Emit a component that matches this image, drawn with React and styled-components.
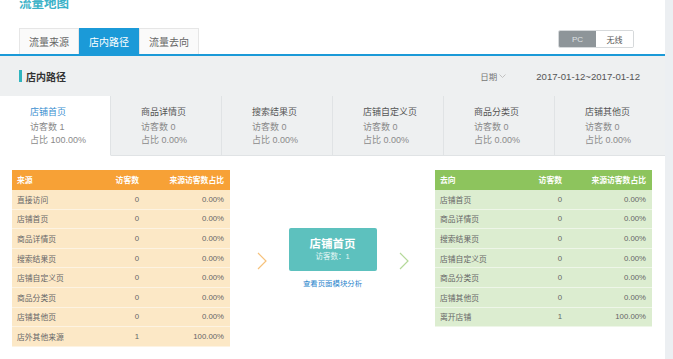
import React from "react"
import styled, { createGlobalStyle } from "styled-components"

const GlobalStyle = createGlobalStyle`
  html, body {
    margin: 0;
    padding: 0;
    background: #fff;
    overflow: hidden;
  }
  body {
    font-family: "Liberation Sans", "Noto Sans CJK SC", sans-serif;
    color: #333;
  }
`

const Page = styled.div`
  display: flex;
  width: 673px;
  height: 359px;
  overflow: hidden;
`

const Main = styled.div`
  width: 665px;
  flex-shrink: 0;
`

const Gutter = styled.div`
  flex: 1;
  background: #eceff2;
`

const PageTitle = styled.div`
  height: 12px;
  margin-top: -2px;
  padding-left: 19px;
  font-size: 12.5px;
  line-height: 12px;
  font-weight: bold;
  color: #3cb2c8;
`

const TabBar = styled.div`
  display: flex;
  align-items: flex-end;
  justify-content: space-between;
  height: 27px;
  margin-top: 17px;
  padding: 0 31px 0 19px;
  border-bottom: 2px solid #1b9ad8;
`

const Tabs = styled.div`
  display: flex;
`

const Tab = styled.div`
  width: 60px;
  height: 26px;
  box-sizing: border-box;
  display: flex;
  align-items: center;
  justify-content: center;
  font-size: 10px;
  color: ${({ active }) => (active ? "#fff" : "#666")};
  background: ${({ active }) => (active ? "#1b9ad8" : "#fafafa")};
  border: 1px solid ${({ active }) => (active ? "#1b9ad8" : "#e6e6e6")};
  border-bottom: none;
`

const Toggle = styled.div`
  display: flex;
  align-self: flex-start;
  margin-top: 3px;
  border: 1px solid #d6d9db;
  border-radius: 2px;
  overflow: hidden;
`

const ToggleItem = styled.div`
  width: 37px;
  height: 16px;
  display: flex;
  align-items: center;
  justify-content: center;
  font-size: 8px;
  color: ${({ active }) => (active ? "#dfe2e4" : "#555")};
  background: ${({ active }) => (active ? "#8e9599" : "#fff")};
`

const SectionHeader = styled.div`
  display: flex;
  align-items: center;
  height: 40px;
  padding: 0 25px 0 19px;
  background: #eef0f1;
`

const Marker = styled.span`
  width: 3px;
  height: 12px;
  margin-right: 4px;
  background: #2fb5bf;
`

const SectionTitle = styled.span`
  flex: 1;
  font-size: 10px;
  font-weight: bold;
  color: #333;
`

const DatePicker = styled.span`
  display: flex;
  align-items: center;
  gap: 2px;
  margin-right: 30px;
  font-size: 8.5px;
  color: #777;
`

const DateRange = styled.span`
  font-size: 9.6px;
  color: #555;
`

const Cards = styled.div`
  display: grid;
  grid-template-columns: repeat(6, 111px);
  height: 60px;
`

const Card = styled.div`
  box-sizing: border-box;
  padding: 10px 0 0 30px;
  background: ${({ active }) => (active ? "#fff" : "#eef0f1")};
  border-right: 1px solid #e0e3e5;
  border-bottom: 1px solid ${({ active }) => (active ? "#fff" : "#e0e3e5")};
  font-size: 9px;
  line-height: 13.5px;
  color: #8a8a8a;
`

const CardTitle = styled.div`
  color: ${({ active }) => (active ? "#3c8fd0" : "#555")};
  margin-bottom: 1px;
`

const Flow = styled.div`
  display: flex;
  align-items: flex-start;
  padding: 14px 0 0 12px;
`

const Table = styled.div`
  width: ${({ w }) => w}px;
  font-size: 7.8px;
`

const Row = styled.div`
  display: grid;
  grid-template-columns: 80px 42px 1fr;
  align-items: center;
  box-sizing: border-box;
  height: ${({ head }) => (head ? "20px" : "19.6px")};
  padding: 0 6px 0 5px;
  background: ${({ bg }) => bg};
  color: ${({ head }) => (head ? "#fff" : "#666")};
  font-weight: ${({ head }) => (head ? "bold" : "normal")};
  border-bottom: 1px solid ${({ head, line }) => (head ? "transparent" : line)};
`

const Cell = styled.span`
  text-align: ${({ align }) => align || "left"};
  white-space: nowrap;
`

const Middle = styled.div`
  width: 205px;
  display: flex;
  justify-content: center;
  padding-top: 58px;
`

const Chevron = styled.svg`
  margin-top: 24px;
  flex-shrink: 0;
`

const NodeWrap = styled.div`
  display: flex;
  flex-direction: column;
  align-items: center;
  margin: 0 22px;
`

const Node = styled.div`
  width: 88px;
  height: 43px;
  box-sizing: border-box;
  padding-top: 9px;
  border-radius: 2px;
  background: #5dc1be;
  color: #fff;
  text-align: center;
`

const NodeTitle = styled.div`
  font-size: 11.5px;
  font-weight: bold;
  line-height: 14px;
`

const NodeSub = styled.div`
  font-size: 7.5px;
  line-height: 12px;
  color: #e6f6f5;
`

const NodeLink = styled.a`
  margin-top: 6px;
  font-size: 7.4px;
  color: #2a86cc;
  text-decoration: none;
`

const cardData = [
  { name: "店铺首页", count: 1, pct: "100.00%", active: true },
  { name: "商品详情页", count: 0, pct: "0.00%" },
  { name: "搜索结果页", count: 0, pct: "0.00%" },
  { name: "店铺自定义页", count: 0, pct: "0.00%" },
  { name: "商品分类页", count: 0, pct: "0.00%" },
  { name: "店铺其他页", count: 0, pct: "0.00%" },
]

const sources = [
  ["直接访问", 0, "0.00%"],
  ["店铺首页", 0, "0.00%"],
  ["商品详情页", 0, "0.00%"],
  ["搜索结果页", 0, "0.00%"],
  ["店铺自定义页", 0, "0.00%"],
  ["商品分类页", 0, "0.00%"],
  ["店铺其他页", 0, "0.00%"],
  ["店外其他来源", 1, "100.00%"],
]

const targets = [
  ["店铺首页", 0, "0.00%"],
  ["商品详情页", 0, "0.00%"],
  ["搜索结果页", 0, "0.00%"],
  ["店铺自定义页", 0, "0.00%"],
  ["商品分类页", 0, "0.00%"],
  ["店铺其他页", 0, "0.00%"],
  ["离开店铺", 1, "100.00%"],
]

const FlowTable = ({ width, first, rows, headBg, rowBg, line }) => (
  <Table w={width}>
    <Row head bg={headBg}>
      <Cell>{first}</Cell>
      <Cell align="right">访客数</Cell>
      <Cell align="right">来源访客数占比</Cell>
    </Row>
    {rows.map(([name, count, pct]) => (
      <Row key={name} bg={rowBg} line={line}>
        <Cell>{name}</Cell>
        <Cell align="right">{count}</Cell>
        <Cell align="right">{pct}</Cell>
      </Row>
    ))}
  </Table>
)

const Arrow = ({ color }) => (
  <Chevron width="10" height="18" viewBox="0 0 10 18">
    <polyline points="1,1 9,9 1,17" fill="none" stroke={color} strokeWidth="1.2" />
  </Chevron>
)

const App = () => (
  <Page>
    <GlobalStyle />
    <Main>
      <PageTitle>流量地图</PageTitle>
      <TabBar>
        <Tabs>
          <Tab>流量来源</Tab>
          <Tab active>店内路径</Tab>
          <Tab>流量去向</Tab>
        </Tabs>
        <Toggle>
          <ToggleItem active>PC</ToggleItem>
          <ToggleItem>无线</ToggleItem>
        </Toggle>
      </TabBar>
      <SectionHeader>
        <Marker />
        <SectionTitle>店内路径</SectionTitle>
        <DatePicker>
          日期
          <svg width="7" height="5" viewBox="0 0 7 5">
            <polyline points="0.5,0.5 3.5,3.5 6.5,0.5" fill="none" stroke="#bbb" strokeWidth="0.9" />
          </svg>
        </DatePicker>
        <DateRange>2017-01-12~2017-01-12</DateRange>
      </SectionHeader>
      <Cards>
        {cardData.map((c) => (
          <Card key={c.name} active={c.active}>
            <CardTitle active={c.active}>{c.name}</CardTitle>
            <div>访客数 {c.count}</div>
            <div>占比 {c.pct}</div>
          </Card>
        ))}
      </Cards>
      <Flow>
        <FlowTable
          width={218}
          first="来源"
          rows={sources}
          headBg="#f7a136"
          rowBg="#fce8c6"
          line="#fdf3e2"
        />
        <Middle>
          <Arrow color="#f6c27c" />
          <NodeWrap>
            <Node>
              <NodeTitle>店铺首页</NodeTitle>
              <NodeSub>访客数：1</NodeSub>
            </Node>
            <NodeLink href="#">查看页面模块分析</NodeLink>
          </NodeWrap>
          <Arrow color="#b5d99a" />
        </Middle>
        <FlowTable
          width={217}
          first="去向"
          rows={targets}
          headBg="#8dc45d"
          rowBg="#dcedd0"
          line="#eef6e8"
        />
      </Flow>
    </Main>
    <Gutter />
  </Page>
)

export default App
